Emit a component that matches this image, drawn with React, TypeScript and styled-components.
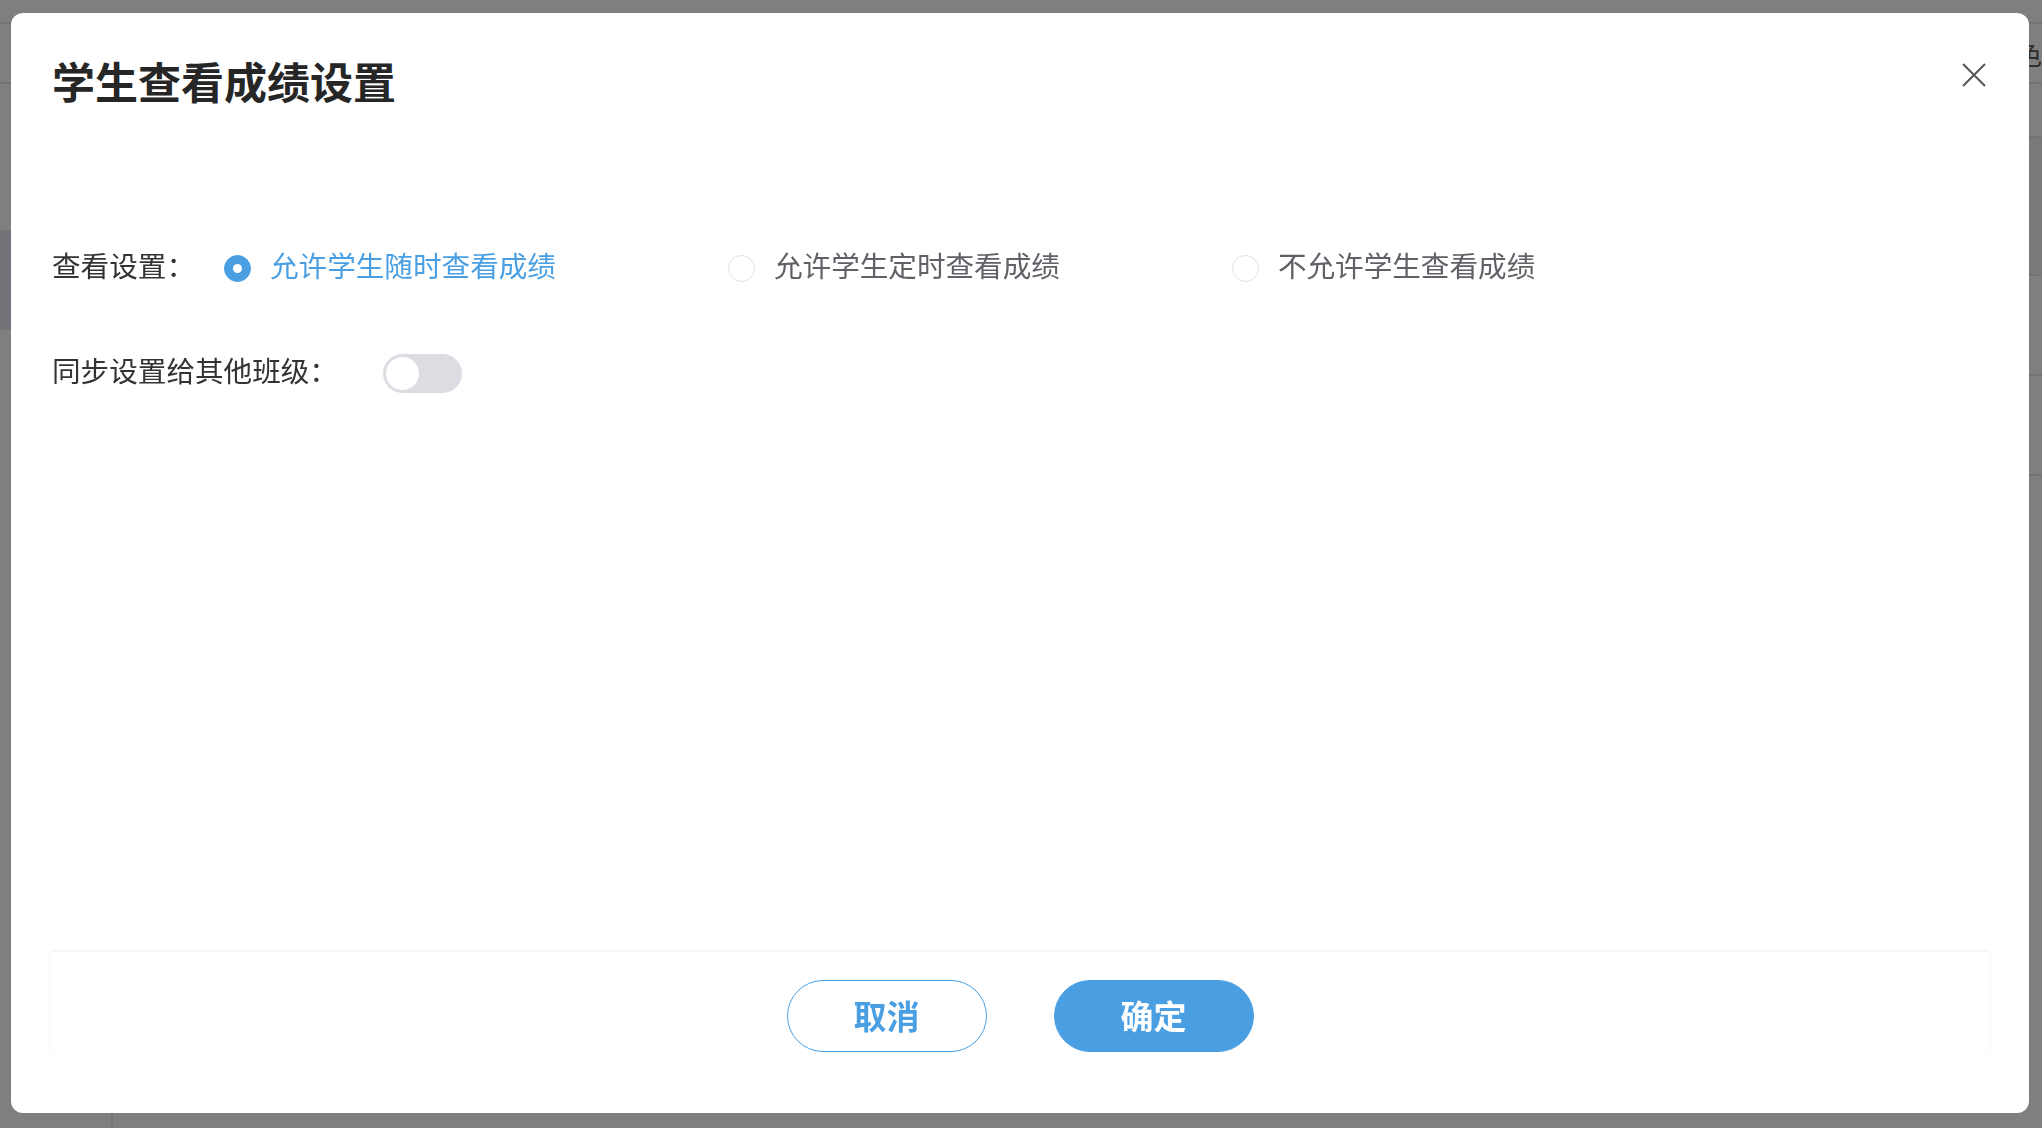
import React from "react";
import styled, { createGlobalStyle } from "styled-components";

const GlobalStyle = createGlobalStyle`
  html, body {
    margin: 0;
    padding: 0;
    width: 100%;
    height: 100%;
    overflow: hidden;
  }
  body {
    font-family: "Noto Sans CJK SC", "Noto Sans", sans-serif;
    background: #ffffff;
  }
  * { box-sizing: border-box; }
`;

const BLUE = "#4a9fe3";

/* ---------- background page (dimmed under the modal) ---------- */
const Page = styled.div`
  width: 100vw;
  height: 100vh;
  display: flex;
  flex-direction: column;
  background: #ffffff;
`;

const TopBar = styled.div`
  height: 24px;
  border-bottom: 2px solid #e6e6e6;
`;

const SubBar = styled.div`
  height: 60px;
  border-bottom: 2px solid #e6e6e6;
  display: flex;
  justify-content: flex-end;
  align-items: center;
  color: #555;
  font-size: 26px;
`;

const PageBody = styled.div`
  flex: 1;
  display: flex;
`;

const Sidebar = styled.div`
  width: 113px;
  border-right: 2px solid #e6e6e6;
  display: flex;
  flex-direction: column;
  padding-top: 146px;
`;

const NavItem = styled.div<{ $active?: boolean }>`
  height: 100px;
  background: ${(p) => (p.$active ? "#e4e9f2" : "transparent")};
`;

const Content = styled.div`
  flex: 1;
  display: flex;
  flex-direction: column;
  padding-top: 14px;
`;

const ContentRow = styled.div<{ $h: number; $shade?: boolean }>`
  height: ${(p) => p.$h}px;
  border-bottom: 2px solid #e6e6e6;
  background: ${(p) => (p.$shade ? "#f4f5f7" : "transparent")};
`;

/* ---------- modal ---------- */
const Overlay = styled.div`
  position: fixed;
  inset: 0;
  background: rgba(0, 0, 0, 0.5);
  display: flex;
  align-items: flex-start;
  padding: 13px 0 0 11px;
`;

const Dialog = styled.div`
  width: 2018px;
  height: 1100px;
  background: #ffffff;
  border-radius: 12px;
  display: flex;
  flex-direction: column;
`;

const Header = styled.div`
  display: flex;
  justify-content: space-between;
  align-items: flex-start;
  padding: 0 43px 0 41px;
`;

const Title = styled.h2`
  margin: 46px 0 0 0;
  font-size: 43px;
  line-height: 43px;
  font-weight: 600;
  color: #262626;
  letter-spacing: 0;
`;

const CloseButton = styled.button`
  margin-top: 50px;
  width: 24px;
  height: 24px;
  padding: 0;
  border: none;
  background: transparent;
  display: flex;
  cursor: pointer;
`;

const Body = styled.div`
  display: flex;
  flex-direction: column;
  padding: 146px 41px 0 41px;
  gap: 65px;
`;

const Row = styled.div`
  display: flex;
  align-items: center;
  height: 40px;
`;

const Label = styled.span`
  font-size: 28.6px;
  line-height: 34px;
  padding-bottom: 6px;
  color: #333333;
  white-space: nowrap;
`;

const RadioGroup = styled.div<{ $offset: number }>`
  display: flex;
  align-items: center;
  gap: 172px;
  margin-left: ${(p) => p.$offset}px;
`;

const RadioItem = styled.label`
  display: flex;
  align-items: center;
  gap: 19px;
  cursor: pointer;
`;

const RadioCircle = styled.span<{ $checked?: boolean }>`
  width: 27px;
  height: 27px;
  border-radius: 50%;
  flex: none;
  display: flex;
  align-items: center;
  justify-content: center;
  background: ${(p) => (p.$checked ? BLUE : "#ffffff")};
  border: 1px solid ${(p) => (p.$checked ? BLUE : "#dcdfe6")};
  &::after {
    content: "";
    width: 9px;
    height: 9px;
    border-radius: 50%;
    background: #ffffff;
    display: ${(p) => (p.$checked ? "block" : "none")};
  }
`;

const RadioText = styled.span<{ $checked?: boolean }>`
  font-size: 28.6px;
  line-height: 34px;
  padding-bottom: 6px;
  color: ${(p) => (p.$checked ? BLUE : "#5f6166")};
  white-space: nowrap;
`;

const Switch = styled.span<{ $offset: number }>`
  margin-left: ${(p) => p.$offset}px;
  width: 79px;
  height: 39px;
  border-radius: 20px;
  background: #dcdde3;
  display: flex;
  align-items: center;
  padding-left: 3px;
  &::after {
    content: "";
    width: 33px;
    height: 33px;
    border-radius: 50%;
    background: #ffffff;
  }
`;

const Footer = styled.div`
  margin: auto 40px 56px 40px;
  height: 105px;
  box-shadow: 0 -1px 3px rgba(0, 0, 0, 0.06);
  display: flex;
  justify-content: center;
  align-items: flex-start;
  padding-top: 28px;
  gap: 67px;
`;

const Button = styled.button<{ $primary?: boolean }>`
  width: 200px;
  height: 72px;
  border-radius: 36px;
  border: 1.5px solid ${BLUE};
  background: ${(p) => (p.$primary ? BLUE : "#ffffff")};
  color: ${(p) => (p.$primary ? "#ffffff" : BLUE)};
  font-family: "Noto Sans CJK SC", sans-serif;
  font-size: 33px;
  font-weight: 600;
  line-height: 1;
  letter-spacing: 0;
  padding: 0 0 2px 0;
  cursor: pointer;
`;

const radios = [
  { text: "允许学生随时查看成绩", checked: true },
  { text: "允许学生定时查看成绩", checked: false },
  { text: "不允许学生查看成绩", checked: false },
];

export default function App() {
  return (
    <>
      <GlobalStyle />
      <Page>
        <TopBar />
        <SubBar>
          <span>色</span>
        </SubBar>
        <PageBody>
          <Sidebar>
            <NavItem $active />
            <NavItem />
          </Sidebar>
          <Content>
            <ContentRow $h={40} />
            <ContentRow $h={138} $shade />
            <ContentRow $h={100} />
            <ContentRow $h={100} />
          </Content>
        </PageBody>
      </Page>
      <Overlay>
        <Dialog>
          <Header>
            <Title>学生查看成绩设置</Title>
            <CloseButton aria-label="关闭">
              <svg width="24" height="24" viewBox="0 0 24 24">
                <path
                  d="M1 1 L23 23 M23 1 L1 23"
                  stroke="#555555"
                  strokeWidth="2"
                  fill="none"
                />
              </svg>
            </CloseButton>
          </Header>
          <Body>
            <Row>
              <Label>查看设置：</Label>
              <RadioGroup $offset={29}>
                {radios.map((r) => (
                  <RadioItem key={r.text}>
                    <RadioCircle $checked={r.checked} />
                    <RadioText $checked={r.checked}>{r.text}</RadioText>
                  </RadioItem>
                ))}
              </RadioGroup>
            </Row>
            <Row>
              <Label>同步设置给其他班级：</Label>
              <Switch $offset={45} />
            </Row>
          </Body>
          <Footer>
            <Button>取消</Button>
            <Button $primary>确定</Button>
          </Footer>
        </Dialog>
      </Overlay>
    </>
  );
}
